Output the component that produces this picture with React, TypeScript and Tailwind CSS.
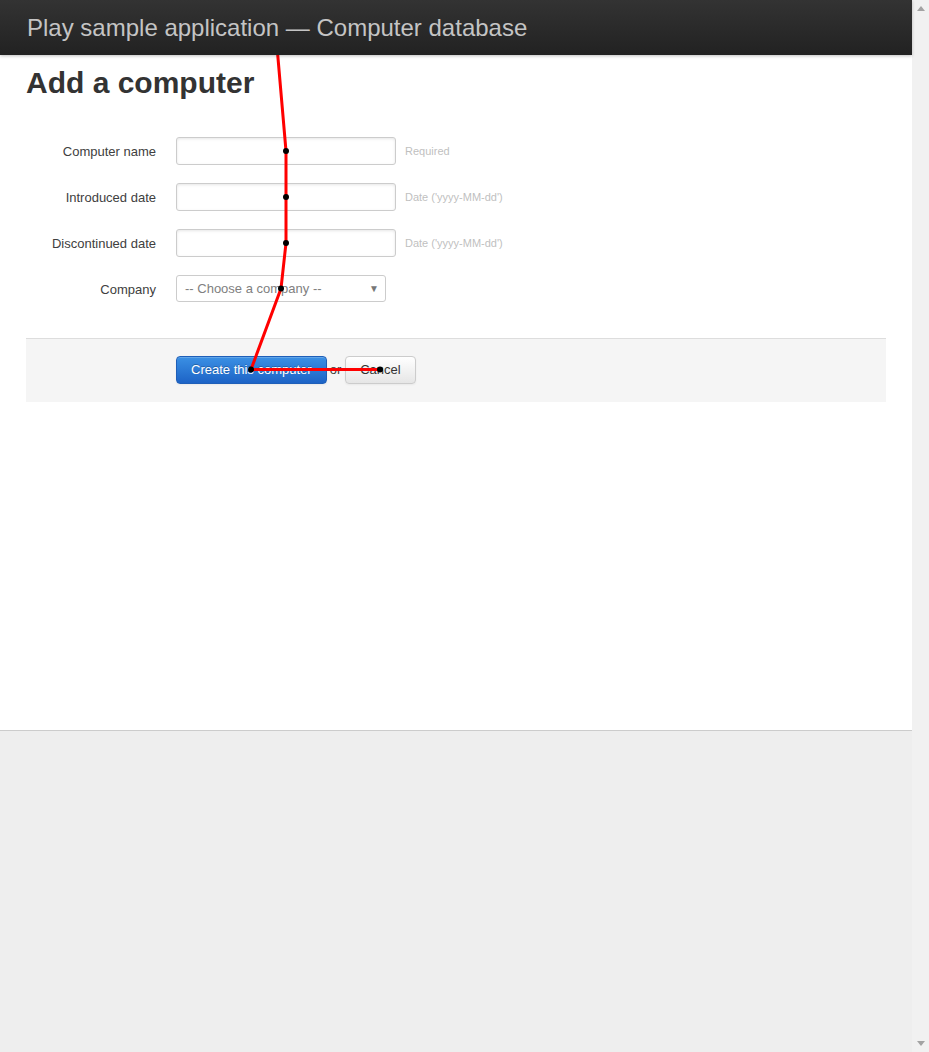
import React from 'react';

interface Field {
  label: string;
  help: string;
}

const fields: Field[] = [
  { label: 'Computer name', help: 'Required' },
  { label: 'Introduced date', help: "Date ('yyyy-MM-dd')" },
  { label: 'Discontinued date', help: "Date ('yyyy-MM-dd')" },
];

// mouse trace drawn over the page
const trace = [
  [273, 0],
  [286, 151],
  [286, 197],
  [286, 243],
  [281, 288.5],
  [251, 369.5],
  [380, 369.5],
];

function Trace() {
  return (
    <svg
      className="pointer-events-none absolute left-0 top-0 z-[5]"
      width="912"
      height="1052"
      viewBox="0 0 912 1052"
    >
      <polyline
        points={trace.map(p => p.join(',')).join(' ')}
        fill="none"
        stroke="#ff0000"
        strokeWidth="3"
        strokeLinejoin="round"
      />
      {trace.slice(1).map(([x, y], i) => (
        <circle key={i} cx={x} cy={y} r="3" fill="#000" />
      ))}
    </svg>
  );
}

function Scrollbar() {
  return (
    <div className="flex w-[17px] shrink-0 flex-col items-center justify-between bg-[#f1f1f1] py-[6px]">
      <svg width="8" height="5" viewBox="0 0 8 5">
        <polygon points="4,0 8,5 0,5" fill="#a3a3a3" />
      </svg>
      <svg width="8" height="5" viewBox="0 0 8 5">
        <polygon points="0,0 8,0 4,5" fill="#a3a3a3" />
      </svg>
    </div>
  );
}

export default function App() {
  return (
    <div className="flex h-screen bg-[#eeeeee] font-['Liberation_Sans',Arial,sans-serif] text-[13px] text-[#404040]">
      <div className="relative flex flex-1 flex-col">
        <header className="relative z-10 h-[55px] shrink-0 bg-gradient-to-b from-[#333333] to-[#222222] px-[27px] pt-[14px] shadow-[0_1px_3px_rgba(0,0,0,0.25)]">
          <h1 className="text-[24px] leading-[28px] text-[#c4c4c4]">
            Play sample application — Computer database
          </h1>
        </header>

        <main className="h-[676px] shrink-0 border-b border-[#cccccc] bg-white px-[26px] pt-[10px]">
          <h2 className="text-[30px] font-bold leading-[36px] text-[#333333]">Add a computer</h2>

          <form className="mt-[36px] w-[860px]">
            <fieldset className="flex flex-col gap-[18px] pb-[36px]">
              {fields.map(f => (
                <div key={f.label} className="flex items-start">
                  <label className="w-[130px] pt-[6px] text-right leading-[18px]">{f.label}</label>
                  <input
                    type="text"
                    className="ml-[20px] h-[28px] w-[220px] rounded-[3px] border border-[#cccccc] px-[4px] shadow-[inset_0_1px_3px_rgba(0,0,0,0.1)] outline-none"
                  />
                  <span className="ml-[9px] pt-[7px] text-[11px] leading-[14px] text-[#bfbfbf]">{f.help}</span>
                </div>
              ))}
              <div className="flex items-start">
                <label className="w-[130px] pt-[6px] text-right leading-[18px]">Company</label>
                <div className="relative ml-[20px] flex h-[27px] w-[210px] items-center rounded-[3px] border border-[#cccccc] pl-[8px] text-[#808080]">
                  -- Choose a company --
                  <span className="absolute right-[6px] top-[5px] text-[10px] text-[#777777]">▼</span>
                </div>
              </div>
            </fieldset>

            <div className="border-t border-[#dddddd] bg-[#f5f5f5] pb-[18px] pl-[150px] pt-[17px]">
              <div className="flex items-center">
                <button
                  type="button"
                  className="h-[28px] rounded-[4px] border border-[#1f5fb8] bg-gradient-to-b from-[#3b90e4] to-[#1d63c6] px-[14px] text-[13px] text-white [text-shadow:0_-1px_0_rgba(0,0,0,0.25)] shadow-[inset_0_1px_0_rgba(255,255,255,0.2),0_1px_2px_rgba(0,0,0,0.05)]"
                >
                  Create this computer
                </button>
                <span className="pl-[3px] pr-[4px]">or</span>
                <button
                  type="button"
                  className="h-[28px] rounded-[4px] border border-[#cccccc] bg-gradient-to-b from-white to-[#e6e6e6] px-[14px] text-[13px] text-[#333333] shadow-[inset_0_1px_0_rgba(255,255,255,0.2),0_1px_2px_rgba(0,0,0,0.05)]"
                >
                  Cancel
                </button>
              </div>
            </div>
          </form>
        </main>

        <div className="flex-1 bg-[#eeeeee]" />

        <Trace />
      </div>
      <Scrollbar />
    </div>
  );
}
